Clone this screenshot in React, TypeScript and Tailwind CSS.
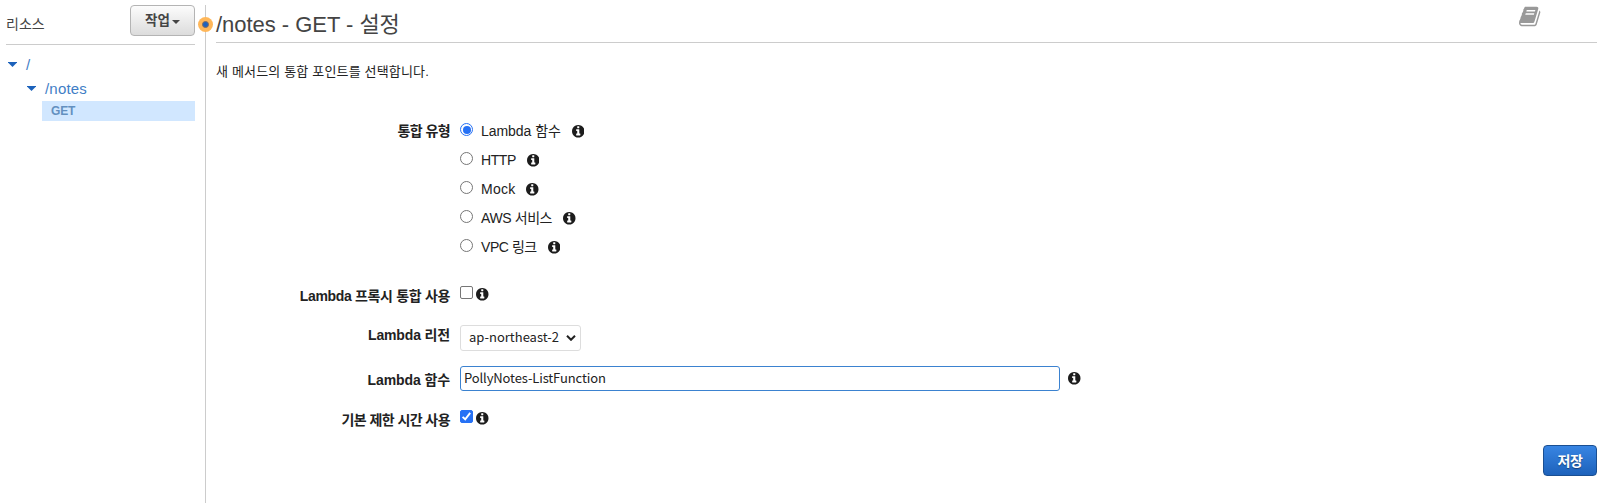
import { useState } from 'react';
import type { ReactNode } from 'react';

const integrationTypes = [
  { name: 'Lambda 함수', tracking: 'tracking-[-0.05px]' },
  { name: 'HTTP', tracking: 'tracking-[-0.4px]' },
  { name: 'Mock', tracking: 'tracking-[0.25px]' },
  { name: 'AWS 서비스', tracking: 'tracking-[-0.4px]' },
  { name: 'VPC 링크', tracking: 'tracking-[-0.45px]' },
];

function Info({ className = '' }: { className?: string }) {
  return (
    <svg viewBox="128 128 1536 1536" className={`size-[12.5px] shrink-0 ${className}`} fill="#1c1c1c">
      <path d="M1152 1376v-160q0-14-9-23t-23-9h-96v-512q0-14-9-23t-23-9h-320q-14 0-23 9t-9 23v160q0 14 9 23t23 9h96v320h-96q-14 0-23 9t-9 23v160q0 14 9 23t23 9h448q14 0 23-9t9-23zm-128-896v-160q0-14-9-23t-23-9h-192q-14 0-23 9t-9 23v160q0 14 9 23t23 9h192q14 0 23-9t9-23zm640 416q0 209-103 385.500t-279.500 279.500-385.500 103-385.500-103-279.500-279.500-103-385.500 103-385.500 279.500-279.500 385.500-103 385.500 103 279.500 279.500 103 385.500z" />
    </svg>
  );
}

function BookIcon() {
  return (
    <svg viewBox="0 0 1792 1792" className="size-[23px]" fill="#999">
      <path d="M1639 478q40 57 18 129l-275 906q-19 64-76.500 107.500t-122.500 43.500h-923q-77 0-148.500-53.500t-99.500-131.500q-24-67-2-127 0-4 3-27t4-37q1-8-3-21.500t-3-19.500q2-11 8-21t16.500-23.500 16.500-23.500q23-38 45-91.500t30-91.500q3-10 .5-30t-.5-28q3-11 17-28t17-23q21-36 42-92t25-90q1-9-2.500-32t.5-28q4-13 22-30.500t22-22.500q19-26 42.500-84.500t27.500-96.500q1-8-3-25.500t-2-26.500q2-8 9-18t18-23 17-21q8-12 16.500-30.500t15-35 16-36 19.500-32 26.500-23.500 36-11.500 47.500 5.500l-1 3q38-9 51-9h761q74 0 114 56t18 130l-274 906q-36 119-71.500 153.500t-128.500 34.500h-869q-27 0-38 15-11 16-1 43 24 70 144 70h923q29 0 56-15.500t35-41.500l300-987q7-22 5-57 38 15 59 43zm-1064 2q-4 13 2 22.500t20 9.500h608q13 0 25.500-9.500t16.500-22.500l21-64q4-13-2-22.500t-20-9.500h-608q-13 0-25.500 9.500t-16.500 22.500zm-83 256q-4 13 2 22.500t20 9.500h608q13 0 25.500-9.500t16.500-22.500l21-64q4-13-2-22.500t-20-9.500h-608q-13 0-25.500 9.500t-16.500 22.500z" />
    </svg>
  );
}

function Caret() {
  return (
    <svg viewBox="0 0 9 5" className="-mt-px h-[5px] w-[9px] shrink-0" fill="#1c62bb">
      <path d="M0 0h9v.6L4.500 5 0 .6z" />
    </svg>
  );
}

function Radio({ checked, onSelect, label }: { checked: boolean; onSelect: () => void; label: string }) {
  return (
    <button
      role="radio"
      aria-checked={checked}
      aria-label={label}
      onClick={onSelect}
      className={`mb-[4px] flex size-[13px] shrink-0 items-center justify-center rounded-full border bg-white ${checked ? 'border-[#2671f5]' : 'border-[#767676]'}`}
    >
      {checked && <span className="size-[8px] rounded-full bg-[#2671f5]" />}
    </button>
  );
}

function Checkbox({ checked, onToggle, label }: { checked: boolean; onToggle: () => void; label: string }) {
  return (
    <button
      role="checkbox"
      aria-checked={checked}
      aria-label={label}
      onClick={onToggle}
      className={`size-[13px] shrink-0 rounded-[2px] border ${checked ? 'border-[#2671f5] bg-[#2671f5]' : 'border-[#767676] bg-white'}`}
    >
      {checked && (
        <svg viewBox="0 0 11 11" className="size-[11px]" fill="none" stroke="#fff" strokeWidth="1.900">
          <path d="M1.600 5.900 4.200 8.300 9.200 1.900" />
        </svg>
      )}
    </button>
  );
}

function Row({ label, className, labelClass = '', children }: { label: string; className: string; labelClass?: string; children: ReactNode }) {
  return (
    <div className={`flex items-start ${className}`}>
      <div className={`mr-[10px] w-[234px] shrink-0 text-right text-[14px] leading-[20px] font-bold whitespace-nowrap ${labelClass}`}>{label}</div>
      {children}
    </div>
  );
}

export default function App() {
  const [type, setType] = useState('Lambda 함수');
  const [proxy, setProxy] = useState(false);
  const [timeout, setTimeoutDefault] = useState(true);
  const [fn, setFn] = useState('PollyNotes-ListFunction');

  return (
    <div className="flex h-[503px] w-full overflow-hidden bg-white font-['Liberation_Sans','Noto_Sans_CJK_KR',sans-serif] text-[14px] text-[#222]">
      <aside className="w-[205px] shrink-0 pt-[5px] pr-[10px] pl-[6px]">
        <div className="flex h-[40px] items-start justify-between border-b border-[#ccc]">
          <span className="pt-[9px] text-[14px] leading-[20px] text-[#444]">리소스</span>
          <button className="flex h-[31px] w-[65px] items-center justify-center gap-[2px] rounded-[4px] border border-[#b4b4b4] bg-linear-to-b from-[#fcfcfc] to-[#dcdcdc] pt-[2px] text-[13.500px] font-bold text-[#444]">
            <span>작업</span>
            <svg viewBox="0 0 8 4" className="h-[4px] w-[8px]" fill="#444"><path d="M0 0h8L4 4z" /></svg>
          </button>
        </div>
        <div className="pt-[8px] text-[15px] text-[#3f7ec6]">
          <div className="flex h-[24px] items-center gap-[9px] pl-[2px]"><Caret /><span>/</span></div>
          <div className="flex h-[24px] items-center gap-[9px] pl-[21px]"><Caret /><span className="tracking-[0.2px]">/notes</span></div>
          <div className="ml-[36px] flex h-[20px] items-center bg-[#d1e7ff] pl-[9px] text-[12px] font-bold tracking-[-0.2px] text-[#6390bf]">GET</div>
        </div>
      </aside>

      <div className="relative mt-[5px] w-px shrink-0 bg-[#ccc]">
        <div className="absolute top-[12px] left-[-7px] flex size-[15px] items-center justify-center rounded-full bg-[#ffb759]">
          <span className="size-[7px] rounded-full border border-[#806b60] bg-[#1f62bd]" />
        </div>
      </div>

      <main className="min-w-0 flex-1 pr-[9px] pl-[10px]">
        <header className="flex h-[43px] items-start justify-between border-b border-[#ccc] pr-[55px]">
          <h1 className="pt-[10px] text-[22px] leading-[30px] tracking-[-0.03px] text-[#444]">/notes - GET - 설정</h1>
          <div className="pt-[5px]"><BookIcon /></div>
        </header>
        <p className="pt-[19px] text-[13px] leading-[20px] tracking-[0.17px]">새 메서드의 통합 포인트를 선택합니다.</p>

        <Row label="통합 유형" className="mt-[35px]" labelClass="pt-[4px] tracking-[-0.6px]">
          <div role="radiogroup">
            {integrationTypes.map((item) => (
              <div key={item.name} className="flex h-[29px] items-center whitespace-nowrap">
                <Radio label={item.name} checked={type === item.name} onSelect={() => setType(item.name)} />
                <span className={`mr-[11px] ml-[8px] ${item.tracking}`}>{item.name}</span>
                <Info />
              </div>
            ))}
          </div>
        </Row>

        <Row label="Lambda 프록시 통합 사용" className="mt-[24px] h-[40px]" labelClass="tracking-[-0.33px]">
          <div className="flex items-start">
            <Checkbox label="Lambda 프록시 통합 사용" checked={proxy} onToggle={() => setProxy(!proxy)} />
            <Info className="mt-[2px] ml-[3px]" />
          </div>
        </Row>
        <Row label="Lambda 리전" className="-mt-[1px] h-[41px]" labelClass="tracking-[-0.15px]">
          <button className="flex h-[26px] w-[121px] items-center justify-between rounded-[3px] border border-[#ddd] pr-[4px] pb-[2px] pl-[8px] font-['Noto_Sans_CJK_KR',sans-serif] text-[13px] whitespace-nowrap">
            <span>ap-northeast-2</span>
            <svg viewBox="0 0 10 6" className="mt-[2px] h-[6px] w-[10px]" fill="none" stroke="#222" strokeWidth="2"><path d="m1 .8 4 4 4-4" /></svg>
          </button>
        </Row>
        <Row label="Lambda 함수" className="h-[44px]" labelClass="pt-[4px] tracking-[-0.1px]">
          <div className="flex items-center">
            <input
              aria-label="Lambda 함수"
              value={fn}
              onChange={(e) => setFn(e.target.value)}
              className="h-[25px] w-[600px] rounded-[3px] border border-[#3b82d0] px-[3px] pb-[2px] font-['Noto_Sans_CJK_KR',sans-serif] text-[13px] tracking-[-0.12px] outline-none"
            />
            <Info className="ml-[8px]" />
          </div>
        </Row>
        <Row label="기본 제한 시간 사용" className="h-[35px]" labelClass="tracking-[-0.57px]">
          <div className="flex items-start">
            <Checkbox label="기본 제한 시간 사용" checked={timeout} onToggle={() => setTimeoutDefault(!timeout)} />
            <Info className="mt-[2px] ml-[3px]" />
          </div>
        </Row>
        <div className="flex justify-end">
          <button className="h-[31px] w-[54px] rounded-[4px] border border-[#1a4f92] bg-linear-to-b from-[#3885e3] to-[#1d62bb] pt-px text-[14px] font-bold tracking-[-0.5px] text-white text-shadow-[0_1px_1px_#0006]">저장</button>
        </div>
      </main>
    </div>
  );
}
